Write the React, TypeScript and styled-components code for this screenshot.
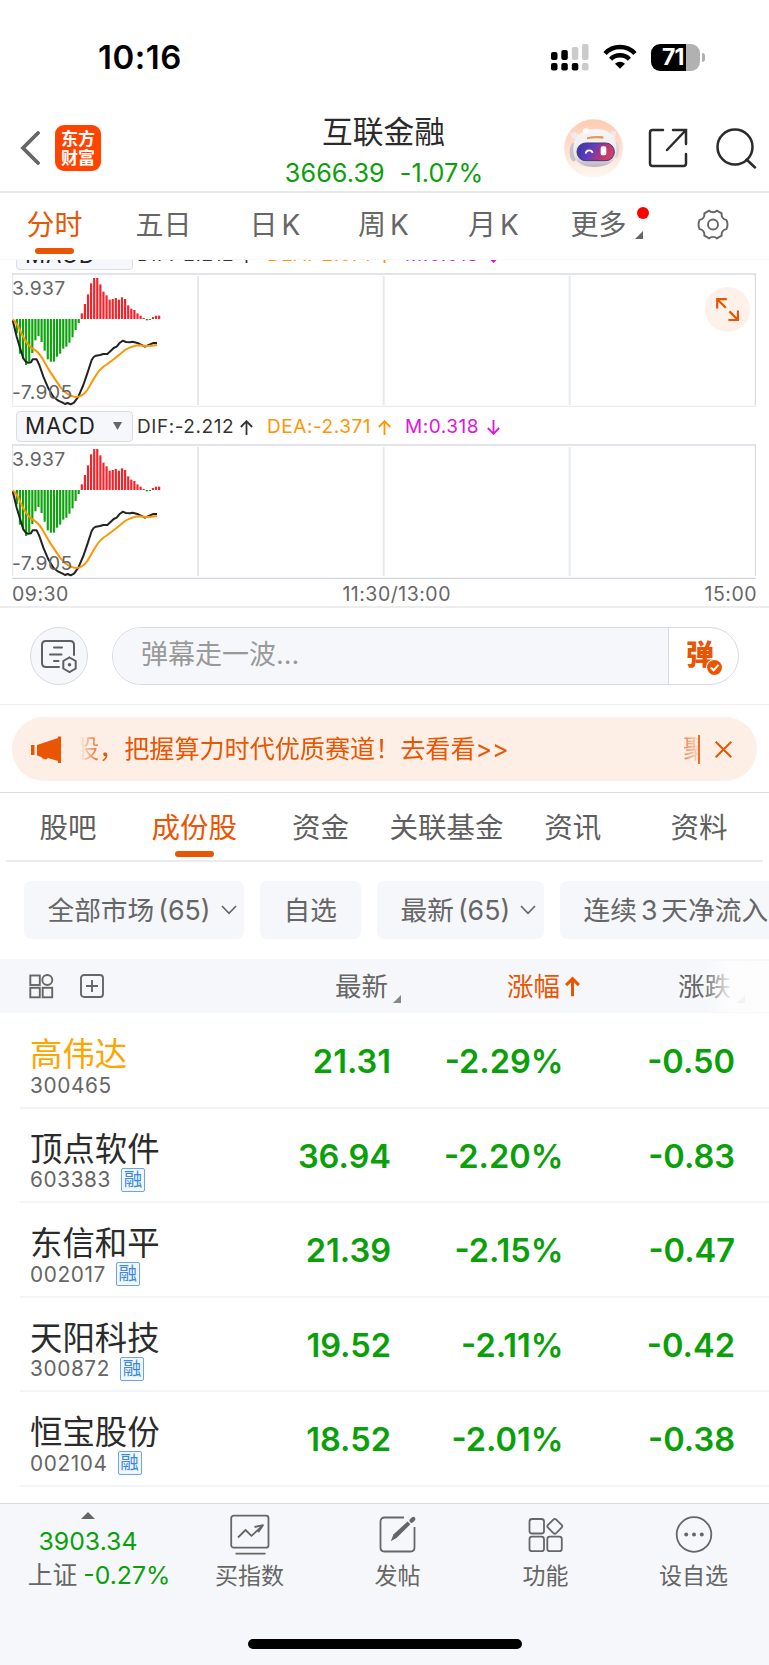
import React from 'react';
import styled, { createGlobalStyle } from 'styled-components';

const GREEN = '#09a009';
const ORANGE = '#ea5504';
const GREY = '#666';
const PANEL = '#f6f7fa';

const GlobalStyle = createGlobalStyle`
  *, *::before, *::after { box-sizing: border-box; }
  body {
    margin: 0;
    background: #fff;
    font-family: Inter, 'Noto Sans CJK SC', sans-serif;
    font-weight: 400;
    color: #2b2b2b;
  }
  svg { display: block; flex: none; }
`;

const Screen = styled.div`
  width: 769px;
  height: 1665px;
  overflow: hidden;
  display: flex;
  flex-direction: column;
  background: #fff;
  white-space: nowrap;
`;

/* ---------- status bar ---------- */

const StatusBar = styled.div`
  height: 114px;
  flex: none;
  display: flex;
  justify-content: space-between;
  padding: 37px 64px 0 98px;
`;

const Clock = styled.div`
  font-size: 33px;
  line-height: 41px;
  font-weight: 600;
  letter-spacing: 0.5px;
  color: #000;
`;

const StatusIcons = styled.div`
  display: flex;
  align-items: center;
  height: 40px;
`;

const BatteryBody = styled.div`
  width: 49px;
  height: 27px;
  border-radius: 9px;
  margin-left: 14px;
  background: linear-gradient(90deg, #000 71%, #b1b1b1 71%);
  color: #fff;
  font-size: 23px;
  line-height: 27px;
  font-weight: 700;
  letter-spacing: -0.8px;
  padding-left: 11px;
`;

const BatteryCap = styled.div`
  width: 3px;
  height: 9px;
  margin-left: 2px;
  border-radius: 0 4px 4px 0;
  background: #b1b1b1;
`;

/* ---------- header ---------- */

const Header = styled.header`
  height: 79px;
  flex: none;
  display: grid;
  grid-template-columns: 250px 1fr 250px;
  border-bottom: 2px solid #e8e8e8;
`;

const HeaderLeft = styled.div`
  display: flex;
  align-items: center;
  height: 68px;
  padding-left: 20px;
`;

const BrandLogo = styled.div`
  width: 46px;
  height: 46px;
  margin-left: 15px;
  border-radius: 9px;
  background: #ff4400;
  color: #fff;
  font-family: 'Noto Sans CJK SC', sans-serif;
  font-size: 17px;
  line-height: 19px;
  font-weight: 700;
  text-align: center;
  padding-top: 3px;
`;

const HeaderTitle = styled.div`
  text-align: center;
`;

const TitleName = styled.div`
  font-size: 30.7px;
  line-height: 36px;
  margin-left: -2px;
  color: #2b2b2b;
`;

const TitleQuote = styled.div`
  display: flex;
  justify-content: center;
  gap: 15px;
  margin: 9px 0 0 -1px;
  font-size: 25.2px;
  letter-spacing: 0.1px;
  line-height: 28px;
  color: ${GREEN};
`;

const HeaderRight = styled.div`
  display: flex;
  align-items: center;
  height: 68px;
  padding-left: 45px;
`;

/* ---------- period tabs ---------- */

const PeriodTabs = styled.nav`
  height: 66px;
  flex: none;
  display: grid;
  grid-template-columns: 109px 109px 116px 101px 119px 89px 1fr;
`;

const PeriodTab = styled.div<{ $active?: boolean }>`
  position: relative;
  display: flex;
  justify-content: center;
  padding-top: 12px;
  font-size: 28px;
  line-height: 40px;
  color: ${(p) => (p.$active ? ORANGE : GREY)};
`;

const Underline = styled.i`
  position: absolute;
  left: calc(50% - 19.5px);
  bottom: 5px;
  width: 39px;
  height: 6px;
  border-radius: 3px;
  background: ${ORANGE};
`;

const Latin = styled.span`
  margin-left: 4px;
`;

const TabLetter = styled.span`
  margin: 0 2px 0 4px;
`;

const RedDot = styled.i`
  position: absolute;
  left: 82.5px;
  top: 13.5px;
  width: 12px;
  height: 12px;
  border-radius: 50%;
  background: #f00;
`;

const Corner = styled.i<{ $left: number; $top: number; $color?: string }>`
  position: absolute;
  left: ${(p) => p.$left}px;
  top: ${(p) => p.$top}px;
  width: 8px;
  height: 8px;
  background: ${(p) => p.$color ?? GREY};
  clip-path: polygon(100% 0, 100% 100%, 0 100%);
`;

const GearCell = styled.div`
  display: flex;
  align-items: flex-start;
  padding: 16px 0 0 54px;
`;

/* ---------- indicator charts ---------- */

const Charts = styled.section`
  height: 349px;
  flex: none;
  overflow: hidden;
  border-top: 1px solid #f6f6f6;
  border-bottom: 2px solid #ededed;
  padding: 0 12px;
  display: flex;
  flex-direction: column;
`;

const Legend = styled.div<{ $first?: boolean }>`
  display: flex;
  align-items: flex-start;
  flex: none;
  height: ${(p) => (p.$first ? 34 : 36)}px;
  margin-top: ${(p) => (p.$first ? -21 : 0)}px;
  padding-top: ${(p) => (p.$first ? 0 : 2.5)}px;
  font-size: 19px;
  line-height: 32px;
  letter-spacing: 0.55px;
`;

const IndicatorSelect = styled.div`
  width: 117px;
  height: 31px;
  margin: 0 4px 0 4px;
  padding: 0 10px 0 8px;
  display: flex;
  justify-content: space-between;
  align-items: center;
  border: 1px solid #dcdde3;
  border-radius: 4px;
  background: ${PANEL};
  font-size: 22.3px;
  line-height: 30px;
  letter-spacing: 0.9px;
  color: #222;
`;

const LegendItem = styled.span<{ $color: string; $width: number }>`
  display: flex;
  justify-content: space-between;
  width: ${(p) => p.$width}px;
  margin-right: 14px;
  color: ${(p) => p.$color};
  svg { margin-top: 9px; }
`;

const ChartBox = styled.div`
  position: relative;
  height: 135px;
  flex: none;
`;

const AxisLabel = styled.span<{ $bottom?: boolean }>`
  position: absolute;
  left: 0;
  ${(p) => (p.$bottom ? 'top: 108px;' : 'top: 4px;')}
  font-size: 19.3px;
  line-height: 22px;
  letter-spacing: 0.4px;
  color: ${GREY};
`;

const ExpandButton = styled.div`
  position: absolute;
  left: 693px;
  top: 14px;
  width: 45px;
  height: 45px;
  border-radius: 50%;
  background: #fdf1ea;
  display: flex;
  align-items: center;
  justify-content: center;
`;

const TimeAxis = styled.div`
  display: flex;
  justify-content: space-between;
  padding-top: 3px;
  font-size: 19.5px;
  line-height: 24px;
  letter-spacing: 0.5px;
  color: ${GREY};
`;

const MiddayLabel = styled.span`
  padding-left: 20px;
`;

/* ---------- comment bar ---------- */

const CommentBar = styled.section`
  height: 97px;
  flex: none;
  display: flex;
  align-items: center;
  padding-left: 30px;
  border-bottom: 1px solid #f0f0f0;
`;

const RoundButton = styled.div`
  width: 58px;
  height: 58px;
  border: 1px solid #d9dae1;
  border-radius: 50%;
  background: ${PANEL};
  display: flex;
  align-items: center;
  justify-content: center;
`;

const CommentPill = styled.div`
  width: 627px;
  height: 58px;
  margin-left: 24px;
  display: flex;
  border: 1px solid #d9dae1;
  border-radius: 29px;
  overflow: hidden;
`;

const CommentInput = styled.div`
  width: 556px;
  border-right: 1px solid #d9dae1;
  background: ${PANEL};
  padding-left: 28px;
  font-size: 27px;
  line-height: 53px;
  color: #999;
`;

const BarrageToggle = styled.div`
  position: relative;
  padding-left: 17px;
  font-size: 28px;
  line-height: 54px;
  font-weight: 900;
  color: ${ORANGE};
  svg { position: absolute; left: 37px; top: 31px; }
`;

/* ---------- notice ---------- */

const NoticeArea = styled.section`
  height: 88px;
  flex: none;
  padding: 12px 12px 0;
  border-bottom: 1px solid #dedede;
`;

const Notice = styled.div`
  height: 64px;
  border-radius: 32px;
  background: #fdeee6;
  display: flex;
  align-items: center;
  padding-left: 19px;
  color: ${ORANGE};
`;

const Marquee = styled.div`
  width: 618px;
  margin-left: 19px;
  height: 40px;
  overflow: hidden;
  display: flex;
  font-size: 25.1px;
  line-height: 40px;
  mask-image: linear-gradient(90deg, transparent, #000 22px, #000 596px, transparent 622px);
`;

const MarqueeText = styled.span`
  margin-left: -6px;
  width: 609px;
  flex: none;
`;

const NoticeSplit = styled.i`
  width: 2px;
  height: 29px;
  margin-right: 15px;
  background: ${ORANGE};
  opacity: 0.85;
`;

/* ---------- section tabs ---------- */

const SectionTabs = styled.nav`
  height: 69px;
  flex: none;
  margin: 0 6px;
  display: flex;
  border-bottom: 2px solid #ebebeb;
`;

const SectionTab = styled.div<{ $active?: boolean }>`
  position: relative;
  flex: 1;
  text-align: center;
  margin-left: -1px;
  margin-right: 1px;
  font-size: 28.5px;
  line-height: 70px;
  color: ${(p) => (p.$active ? ORANGE : '#5f5f5f')};
  ${Underline} { bottom: 3px; }
`;

/* ---------- filter chips ---------- */

const Chips = styled.div`
  height: 97px;
  flex: none;
  display: flex;
  gap: 16px;
  padding: 19px 0 0 24px;
  overflow: hidden;
`;

const Chip = styled.div<{ $width: number }>`
  flex: none;
  width: ${(p) => p.$width}px;
  height: 58px;
  border-radius: 7px;
  background: ${PANEL};
  display: flex;
  align-items: center;
  padding-left: 23.5px;
  font-size: 26.7px;
  line-height: 58px;
  color: ${GREY};
  svg { margin-left: 10px; }
`;

/* ---------- table ---------- */

const TableHead = styled.div`
  position: relative;
  height: 54px;
  flex: none;
  margin-bottom: 1px;
  display: grid;
  grid-template-columns: 392px 172px 173px;
  background: ${PANEL};
  font-size: 26.5px;
  line-height: 54px;
  color: ${GREY};
`;

const HeadFirst = styled.div`
  position: relative;
  display: flex;
  align-items: center;
  padding-left: 29px;
  svg + svg { margin-left: 26px; }
`;

const HeadLabel = styled.span`
  margin-left: auto;
  margin-right: 4px;
`;

const HeadSort = styled.div`
  display: flex;
  align-items: center;
  padding-left: 115px;
  color: ${ORANGE};
  svg { margin-left: 5px; }
`;

const HeadLast = styled.div`
  position: relative;
  padding-left: 114px;
`;

const EdgeFade = styled.div`
  position: absolute;
  right: 0;
  top: 2px;
  width: 66px;
  height: 51px;
  background: linear-gradient(90deg, rgba(253, 253, 254, 0), rgba(253, 253, 254, 0.85) 26px, #fdfdfe);
`;

const Row = styled.div`
  height: 94.5px;
  flex: none;
  margin-left: 20px;
  display: grid;
  grid-template-columns: 180px 191px 172.5px 171.5px;
  border-bottom: 2px solid #f3f4f6;
`;

const StockCell = styled.div`
  padding: 21px 0 0 10px;
`;

const StockName = styled.div<{ $hot?: boolean }>`
  font-size: 32.4px;
  line-height: 40px;
  color: ${(p) => (p.$hot ? '#ffa500' : '#2b2b2b')};
`;

const StockCode = styled.div`
  display: flex;
  align-items: center;
  height: 24px;
  margin-top: -2px;
  font-size: 20.8px;
  letter-spacing: 0.6px;
  color: ${GREY};
`;

const MarginBadge = styled.span`
  width: 24px;
  height: 24px;
  margin-left: 10px;
  border: 1.5px solid #6aa5e6;
  border-radius: 2px;
  background: #f1f7fe;
  color: #3c87dc;
  font-size: 18.5px;
  line-height: 20px;
  letter-spacing: 0;
  text-align: center;
`;

const Value = styled.div`
  padding-top: 27px;
  text-align: right;
  font-size: 32.6px;
  line-height: 40px;
  font-weight: 600;
  color: ${GREEN};
`;

/* ---------- bottom bar ---------- */

const BottomBar = styled.footer`
  height: 162px;
  flex: none;
  margin-top: auto;
  border-top: 1px solid #d9dadd;
  background: ${PANEL};
  display: flex;
  flex-direction: column;
  align-items: center;
`;

const BottomItems = styled.div`
  width: 769px;
  height: 135px;
  display: grid;
  grid-template-columns: 176px 148px 148px 148px 148px;
`;

const IndexCell = styled.div`
  display: flex;
  flex-direction: column;
  align-items: center;
  padding-top: 8px;
  font-size: 24.8px;
  line-height: 30px;
  color: ${GREEN};
`;

const IndexValue = styled.div`
  margin-top: 7px;
`;

const IndexChange = styled.div`
  display: flex;
  gap: 6px;
  margin: 4px 0 0 22px;
`;

const IndexName = styled.span`
  color: ${GREY};
`;

const BottomItem = styled.div`
  display: flex;
  flex-direction: column;
  align-items: center;
  padding: 9.5px 1px 0 0;
  font-size: 23px;
  line-height: 30px;
  color: ${GREY};
  svg { margin-bottom: 5.5px; }
`;

const HomeIndicator = styled.div`
  width: 274px;
  height: 10px;
  border-radius: 5px;
  background: #000;
`;

/* ---------- icons ---------- */

const SignalIcon = () => (
  <svg width="38" height="28" viewBox="0 0 38 28">
    <g fill="#000">
      <rect x="0" y="9" width="6.5" height="8" rx="2" />
      <rect x="10.3" y="7" width="6.5" height="10" rx="2" />
      <rect x="0" y="20" width="6.5" height="7.5" rx="2" />
      <rect x="10.3" y="20" width="6.5" height="7.5" rx="2" />
      <rect x="20.8" y="20" width="6.5" height="7.5" rx="2" />
    </g>
    <g fill="#cbcbcb">
      <rect x="20.8" y="4" width="6.5" height="13" rx="2" />
      <rect x="31" y="1" width="6.5" height="16" rx="2" />
      <rect x="31" y="20" width="6.5" height="7.5" rx="2" />
    </g>
  </svg>
);

const Wifi = styled.svg`
  margin-left: 14px;
`;

const WifiIcon = () => (
  <Wifi width="34" height="26" viewBox="0 0 34 26">
    <g fill="none" stroke="#000" strokeWidth="4.4">
      <path d="M2 9.5C10 .9 24 .9 32 9.5" />
      <path d="M7.6 15.2c5-5.2 13.8-5.2 18.8 0" />
    </g>
    <path d="M17 24.8l-5-5.1c2.8-2.7 7.2-2.7 10 0z" fill="#000" />
  </Wifi>
);

const BackIcon = () => (
  <svg width="20" height="34" viewBox="0 0 20 34" fill="none" stroke="#666" strokeWidth="3.8" strokeLinecap="round">
    <path d="M18 2L3 17l15 15" />
  </svg>
);

const Robot = () => (
  <svg width="59" height="59" viewBox="539 295 177 177">
    <defs>
      <linearGradient id="sky" x1="0" y1="0" x2="0" y2="1">
        <stop offset="0" stopColor="#ffcbb2" />
        <stop offset=".6" stopColor="#ffe3d5" />
        <stop offset="1" stopColor="#fff8f4" />
      </linearGradient>
      <linearGradient id="helmet" x1="0" y1="0" x2="0" y2="1">
        <stop offset="0" stopColor="#f8f6f8" />
        <stop offset=".7" stopColor="#ebe7ec" />
        <stop offset="1" stopColor="#b9b2bd" />
      </linearGradient>
      <linearGradient id="visor" x1="0" y1="0" x2="1" y2=".25">
        <stop offset="0" stopColor="#33359b" />
        <stop offset=".45" stopColor="#5f3cc0" />
        <stop offset=".75" stopColor="#b0357c" />
        <stop offset="1" stopColor="#d03d6a" />
      </linearGradient>
    </defs>
    <circle cx="627.5" cy="383.5" r="88" fill="url(#sky)" />
    <path d="M556 334c3 14 9 20 24 24l14-14c-12-1-18-5-22-14 0 8-8 8-16 4zM696 330c0 16-6 24-20 28l-14-16c12 0 18-4 22-14 2 6 8 6 12 2z" fill="#eeeaf0" />
    <ellipse cx="568" cy="394" rx="12" ry="28" fill="#c6c0ca" />
    <ellipse cx="695" cy="388" rx="9" ry="24" fill="#d8d3dc" />
    <path d="M568 398c-6-44 18-72 64-73 46-1 68 26 64 66-2 32-24 46-62 48-40 0-62-11-66-41z" fill="url(#helmet)" />
    <ellipse cx="605" cy="330" rx="9" ry="7" fill="#fff" />
    <path d="M608 350q24-6 49-3v7q-24-3-49 2z" fill="#e39a54" />
    <rect x="578" y="367" width="112" height="53" rx="26" fill="url(#visor)" stroke="#433a70" strokeWidth="3" />
    <path d="M604 399c2-13 18-13 21-2" fill="none" stroke="#fff" strokeWidth="5" />
    <rect x="649" y="377" width="17" height="27" rx="5" fill="#fff" />
  </svg>
);

const HeaderIcon = styled.svg`
  margin-left: 25px;
  & + & { margin-left: 27px; }
`;

const ShareIcon = () => (
  <HeaderIcon width="40" height="40" viewBox="0 0 40 40" fill="none" stroke="#2b2b2b" strokeWidth="2.5" strokeLinecap="round">
    <path d="M15 2H4.5C3 2 2 3 2 4.5v31C2 37 3 38 4.5 38h31c1.500 0 2.500-1 2.500-2.500V26" />
    <path d="M25 2h13v14M37 3L19 22" />
  </HeaderIcon>
);

const SearchIcon = () => (
  <HeaderIcon width="42" height="42" viewBox="0 0 42 42" fill="none" stroke="#2b2b2b" strokeWidth="2.5" strokeLinecap="round">
    <circle cx="20" cy="20" r="17.5" />
    <path d="M31.5 32.500L40 40.500" />
  </HeaderIcon>
);

const GearIcon = () => (
  <svg width="32" height="31" viewBox="0 0 32 31" fill="none" stroke="#666" strokeWidth="1.9" strokeLinejoin="round">
    <path d="M12.200 1.600C14 3.700 18 3.700 19.800 1.600L24.700 4.400C24.200 7.500 26 10.700 29.400 10.900Q31.600 15.500 29.400 20.100C26 20.300 24.200 23.500 24.700 26.600L19.800 29.400C18 27.300 14 27.300 12.200 29.400L7.300 26.600C7.800 23.500 6 20.300 2.600 20.100Q.4 15.500 2.600 10.900C6 10.700 7.800 7.500 7.300 4.400Z" />
    <circle cx="16" cy="15.5" r="5" />
  </svg>
);

const ArrowIcon = ({ down }: { down?: boolean }) => (
  <svg width="13" height="15" viewBox="0 0 13 15" fill="none" stroke="currentColor" strokeWidth="1.8">
    <path d={down ? 'M6.500 0v14M.8 8l5.700 5.800L12.200 8' : 'M6.500 15V1M.8 7l5.700-5.800L12.200 7'} />
  </svg>
);

const CaretIcon = () => (
  <svg width="9" height="8" viewBox="0 0 9 8">
    <path d="M0 0h9L4.500 8z" fill="#666" />
  </svg>
);

const ExpandIcon = () => (
  <svg width="23" height="23" viewBox="0 0 23 23" fill="none" stroke={ORANGE} strokeWidth="2.2">
    <path d="M1.200 10.500V1.200h9.600M1.200 1.200l8.600 8.600M22 12.500V22h-9.600M22 22l-8.600-8.600" />
  </svg>
);

const BarrageIcon = () => (
  <svg width="38" height="36" viewBox="0 0 38 36" fill="none" stroke="#5f5f5f" strokeWidth="2" strokeLinecap="round">
    <path d="M19 29H6c-2.500 0-4-1.500-4-4V7c0-2.500 1.500-4 4-4h24c2.500 0 4 1.500 4 4v10M14 9.500h8M10 16.500h11.500M14 23h4.500" />
    <path d="M29.500 19.500l6.200 3.500v7.500l-6.200 3.500-6.200-3.500V23z" />
    <circle cx="29.5" cy="26.8" r="1.8" fill="#5f5f5f" stroke="none" />
  </svg>
);

const CheckIcon = () => (
  <svg width="17" height="17" viewBox="0 0 16 16">
    <circle cx="8" cy="8" r="8" fill="#fff" />
    <circle cx="8" cy="8" r="7" fill={ORANGE} />
    <path d="M4.500 8l2.700 2.600 4.600-5" fill="none" stroke="#fff" strokeWidth="1.800" />
  </svg>
);

const HornIcon = () => (
  <svg width="30" height="27" viewBox="0 0 30 27" fill={ORANGE}>
    <path d="M0 9h3.500v10H0zM6 9L27 2V.5h3V27h-3v-2l-10-3-2 1.500-3.500-1L10.500 21 6 19.500z" />
  </svg>
);

const CloseIcon = () => (
  <svg width="17" height="17" viewBox="0 0 17 17" stroke={ORANGE} strokeWidth="2">
    <path d="M.7.700l15.600 15.600M16.300.7L.7 16.300" />
  </svg>
);

const ChevronIcon = () => (
  <svg width="16" height="10" viewBox="0 0 16 10" fill="none" stroke="#666" strokeWidth="1.7">
    <path d="M1 1l7 7.300L15 1" />
  </svg>
);

const GridIcon = () => (
  <svg width="25" height="25" viewBox="0 0 25 25" fill="none" stroke="#666" strokeWidth="1.9">
    <rect x="1.3" y="1.5" width="9.5" height="9.5" />
    <circle cx="18.3" cy="6" r="5" />
    <rect x="1.3" y="13.8" width="9.5" height="9.5" />
    <rect x="13.7" y="13.8" width="9.5" height="9.5" />
  </svg>
);

const PlusBoxIcon = () => (
  <svg width="24" height="24" viewBox="0 0 24 24" fill="none" stroke="#666" strokeWidth="1.9">
    <rect x="1" y="1" width="22" height="22" rx="3" />
    <path d="M12 6v12M6 12h12" />
  </svg>
);

const SortUpIcon = () => (
  <svg width="15" height="21" viewBox="0 0 16 21" fill="none" stroke={ORANGE} strokeWidth="3.2">
    <path d="M8 21V2M1.200 9L8 2.200 14.800 9" />
  </svg>
);

const ChartIcon = () => (
  <svg width="40" height="42" viewBox="0 0 40 42" fill="none" stroke="#666" strokeWidth="1.8" strokeLinejoin="round">
    <rect x="1.2" y="1.7" width="37.3" height="32" rx="2.5" />
    <path d="M5.500 39.700h30M8 23.500l7.500-7.500 6 5.800 10.800-10M24.500 13l8.500-1.800-4.800 7" />
  </svg>
);

const PostIcon = () => (
  <svg width="40" height="42" viewBox="0 0 40 42" fill="none" stroke="#666" strokeWidth="1.8">
    <path d="M26 3.500H6.500C4 3.500 2.500 5 2.500 7.500v26c0 2.500 1.500 4 4 4h26c2.500 0 4-1.500 4-4V13" />
    <path d="M12.800 27.200l2.600-6.600L29.600 7.400l2.800 2.800L18.800 23.800z" fill="#666" stroke="none" />
    <path d="M33.500 6.800l1.800-1.800" strokeWidth="4.2" strokeLinecap="round" />
  </svg>
);

const AppsIcon = () => (
  <svg width="40" height="42" viewBox="0 0 40 42" fill="none" stroke="#666" strokeWidth="1.8" strokeLinejoin="round">
    <rect x="3.5" y="5" width="14.5" height="14.5" rx="2.5" />
    <rect x="3.5" y="22.7" width="14.5" height="14.5" rx="2.5" />
    <rect x="21.3" y="22.7" width="14.5" height="14.5" rx="2.5" />
    <rect x="23" y="6.5" width="11.6" height="11.6" rx="2" transform="rotate(45 28.8 12.3)" />
  </svg>
);

const MoreIcon = () => (
  <svg width="40" height="42" viewBox="0 0 40 42" fill="none" stroke="#666" strokeWidth="1.8">
    <circle cx="20" cy="20.5" r="17.3" />
    <g fill="#666" stroke="none">
      <circle cx="12.2" cy="20.5" r="2" />
      <circle cx="20" cy="20.5" r="2" />
      <circle cx="27.8" cy="20.5" r="2" />
    </g>
  </svg>
);

/* ---------- MACD plot, in thirds of a pixel ---------- */

const bars = [
  250, 311, 325, 345, 335, 309, 271, 258, 276, 302, 328, 335, 335, 320, 311, 296, 290, 278, 262, 240, 219,
  190, 162, 133, 100, 84, 84, 103, 125, 136, 149, 147, 144, 149, 142, 147, 166, 176, 180, 190, 197, 204,
  211, 210, 201, 197, 197,
];
const ZERO = 207;

const difLine =
  '38,210 50,260 62,300 70,325 78,336 85,338 93,337 98,328 110,328 118,345 130,380 145,415 160,440 175,452 188,458 195,462 203,459 212,463 222,458 235,440 250,405 262,370 275,330 281,321 288,317 300,315 310,312 322,312 335,300 341,294 350,290 358,280 368,272 378,276 390,277 398,275 415,280 435,290 450,283 460,279 471,279';
const deaPath =
  'M38 208Q50 215 65 252Q80 282 95 294Q112 302 125 322L150 365L180 410Q205 441 228 441Q247 441 262 420L285 380Q300 355 322 342L345 325L375 300Q400 286 420 286Q440 290 471 285';

const MacdPlot = ({ last }: { last?: boolean }) => (
  <svg width="745" height="135" viewBox="36 69 2235 405">
    <path d="M594 78V465M1151 78V465M1709 78V465" stroke="#e6eaf0" strokeWidth="6" />
    <path d="M36 72H2268" stroke="#d9dbe2" strokeWidth={last ? 5 : 4} />
    <path d="M2266 72V465" stroke="#d2d4dc" strokeWidth="3" />
    <path d="M38 72V465" stroke="#e2e4ea" strokeWidth="3" />
    <path d={last ? 'M36 472H2268' : 'M36 469H2268'} stroke={last ? '#d2d5dd' : '#ededf0'} strokeWidth="4" />
    {bars.map((v, i) => {
      const up = v < ZERO;
      return (
        <rect
          key={i}
          x={47.3 + i * 9.28}
          y={up ? v : ZERO}
          width="6.5"
          height={Math.abs(v - ZERO)}
          fill={up ? '#f5222a' : '#0ea30e'}
        />
      );
    })}
    <polyline points={difLine} fill="none" stroke="#222" strokeWidth="6" strokeLinejoin="round" />
    <path d={deaPath} fill="none" stroke="#ff9500" strokeWidth="6" />
  </svg>
);

const MacdPanel = ({ first }: { first?: boolean }) => (
  <>
    <Legend $first={first}>
      <IndicatorSelect>MACD<CaretIcon /></IndicatorSelect>
      <LegendItem $color="#333" $width={116}>DIF:-2.212<ArrowIcon /></LegendItem>
      <LegendItem $color="#ff9500" $width={124}>DEA:-2.371<ArrowIcon /></LegendItem>
      <LegendItem $color="#dd16dd" $width={95}>M:0.318<ArrowIcon down /></LegendItem>
    </Legend>
    <ChartBox>
      <MacdPlot last={!first} />
      <AxisLabel>3.937</AxisLabel>
      <AxisLabel $bottom>-7.905</AxisLabel>
      {first && <ExpandButton><ExpandIcon /></ExpandButton>}
    </ChartBox>
  </>
);

const stocks = [
  { name: '高伟达', code: '300465', last: '21.31', pct: '-2.29%', diff: '-0.50', hot: true },
  { name: '顶点软件', code: '603383', last: '36.94', pct: '-2.20%', diff: '-0.83' },
  { name: '东信和平', code: '002017', last: '21.39', pct: '-2.15%', diff: '-0.47' },
  { name: '天阳科技', code: '300872', last: '19.52', pct: '-2.11%', diff: '-0.42' },
  { name: '恒宝股份', code: '002104', last: '18.52', pct: '-2.01%', diff: '-0.38' },
];

export default function App() {
  return (
    <Screen>
      <GlobalStyle />
      <StatusBar>
        <Clock>10:16</Clock>
        <StatusIcons>
          <SignalIcon />
          <WifiIcon />
          <BatteryBody>71</BatteryBody>
          <BatteryCap />
        </StatusIcons>
      </StatusBar>

      <Header>
        <HeaderLeft>
          <BackIcon />
          <BrandLogo>东方<br />财富</BrandLogo>
        </HeaderLeft>
        <HeaderTitle>
          <TitleName>互联金融</TitleName>
          <TitleQuote><span>3666.39</span><span>-1.07%</span></TitleQuote>
        </HeaderTitle>
        <HeaderRight>
          <Robot />
          <ShareIcon />
          <SearchIcon />
        </HeaderRight>
      </Header>

      <PeriodTabs>
        <PeriodTab $active>分时<Underline /></PeriodTab>
        <PeriodTab>五日</PeriodTab>
        <PeriodTab>日<TabLetter>K</TabLetter></PeriodTab>
        <PeriodTab>周<TabLetter>K</TabLetter></PeriodTab>
        <PeriodTab>月<TabLetter>K</TabLetter></PeriodTab>
        <PeriodTab>更多<RedDot /><Corner $left={81} $top={38} /></PeriodTab>
        <GearCell><GearIcon /></GearCell>
      </PeriodTabs>

      <Charts>
        <MacdPanel first />
        <MacdPanel />
        <TimeAxis><span>09:30</span><MiddayLabel>11:30/13:00</MiddayLabel><span>15:00</span></TimeAxis>
      </Charts>

      <CommentBar>
        <RoundButton><BarrageIcon /></RoundButton>
        <CommentPill>
          <CommentInput>弹幕走一波...</CommentInput>
          <BarrageToggle>弹<CheckIcon /></BarrageToggle>
        </CommentPill>
      </CommentBar>

      <NoticeArea>
        <Notice>
          <HornIcon />
          <Marquee>
            <MarqueeText>股，把握算力时代优质赛道！去看看&gt;&gt;</MarqueeText>
            <span>聚</span>
          </Marquee>
          <NoticeSplit />
          <CloseIcon />
        </Notice>
      </NoticeArea>

      <SectionTabs>
        <SectionTab>股吧</SectionTab>
        <SectionTab $active>成份股<Underline /></SectionTab>
        <SectionTab>资金</SectionTab>
        <SectionTab>关联基金</SectionTab>
        <SectionTab>资讯</SectionTab>
        <SectionTab>资料</SectionTab>
      </SectionTabs>

      <Chips>
        <Chip $width={220}>全部市场<Latin>(65)</Latin><ChevronIcon /></Chip>
        <Chip $width={101}>自选</Chip>
        <Chip $width={167}>最新<Latin>(65)</Latin><ChevronIcon /></Chip>
        <Chip $width={240}>连续<Latin>3</Latin><Latin>天净流入</Latin></Chip>
      </Chips>

      <TableHead>
        <HeadFirst>
          <GridIcon />
          <PlusBoxIcon />
          <HeadLabel>最新</HeadLabel>
          <Corner $left={393} $top={36} $color="#888" />
        </HeadFirst>
        <HeadSort>涨幅<SortUpIcon /></HeadSort>
        <HeadLast>涨跌<Corner $left={173} $top={36} $color="#888" /></HeadLast>
        <EdgeFade />
      </TableHead>

      {stocks.map((s) => (
        <Row key={s.code}>
          <StockCell>
            <StockName $hot={s.hot}>{s.name}</StockName>
            <StockCode>{s.code}{!s.hot && <MarginBadge>融</MarginBadge>}</StockCode>
          </StockCell>
          <Value>{s.last}</Value>
          <Value>{s.pct}</Value>
          <Value>{s.diff}</Value>
        </Row>
      ))}

      <BottomBar>
        <BottomItems>
          <IndexCell>
            <svg width="14" height="7" viewBox="0 0 14 7"><path d="M7 0l7 7H0z" fill="#666" /></svg>
            <IndexValue>3903.34</IndexValue>
            <IndexChange><IndexName>上证</IndexName><span>-0.27%</span></IndexChange>
          </IndexCell>
          <BottomItem><ChartIcon />买指数</BottomItem>
          <BottomItem><PostIcon />发帖</BottomItem>
          <BottomItem><AppsIcon />功能</BottomItem>
          <BottomItem><MoreIcon />设自选</BottomItem>
        </BottomItems>
        <HomeIndicator />
      </BottomBar>
    </Screen>
  );
}
